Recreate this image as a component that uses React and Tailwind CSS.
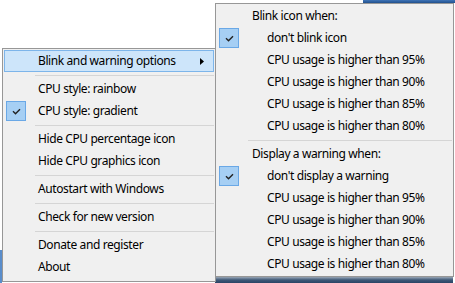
import React from "react";

function Check() {
  return (
    <span className="w-[20px] h-[20px] bg-[#A6CFF4] border border-[#6AA8E6] flex items-center justify-center">
      <svg width="9" height="7" viewBox="0 0 9 7">
        <path d="M1 3.3 L3.5 5.8 L8 1.2" stroke="#222" strokeWidth="1.4" fill="none" />
      </svg>
    </span>
  );
}

function Item({ label, checked, gutter, indent = 0, highlight, arrow }) {
  return (
    <div
      className={
        "h-[22px] flex items-center border " +
        (highlight ? "bg-[#CDE5FA] border-[#7DB5EA]" : "border-transparent")
      }
    >
      <div className={"h-full flex items-center shrink-0 " + gutter}>
        {checked ? <Check /> : null}
      </div>
      <span className="whitespace-nowrap tracking-[-0.4px]" style={{ paddingLeft: indent }}>
        {label}
      </span>
      {arrow ? (
        <span className="ml-auto mr-[9px]">
          <svg width="4" height="7" viewBox="0 0 4 7">
            <path d="M0 0 L4 3.5 L0 7 Z" fill="#000" />
          </svg>
        </span>
      ) : null}
    </div>
  );
}

function Sep() {
  return (
    <div className="h-[6px] flex items-center pl-[31px]">
      <div className="h-px flex-1 bg-[#D5D5D5]" />
    </div>
  );
}

export default function App() {
  const L = "w-[33px] pl-[1px]";
  const R = "w-[34px] pl-[1px]";
  return (
    <div className="relative w-[455px] h-[283px] bg-white overflow-hidden font-['Noto_Sans',sans-serif] text-[12px] text-black">
      {/* desktop bits behind the menus */}
      <div className="absolute left-[363px] top-0 w-[92px] h-[3px] bg-gradient-to-b from-[#3F75B8] to-[#22508C]" />
      <div className="absolute left-0 top-[250px] w-[2px] h-[33px] bg-[#5A8DCB]" />
      <div className="absolute left-[215px] top-[277px] w-[238px] h-[6px] bg-gradient-to-b from-[#9AA7B6] via-[#3E5877] to-[#2A4466]" />

      {/* main menu */}
      <div className="absolute left-[2px] top-[48px] w-[214px] bg-[#F0F0F0] border border-[#979797] pt-[1px] pb-[3px] px-[1px]">
        <Item label="Blink and warning options" gutter={L} highlight arrow />
        <Sep />
        <Item label="CPU style: rainbow" gutter={L} />
        <Item label="CPU style: gradient" gutter={L} checked />
        <Sep />
        <Item label="Hide CPU percentage icon" gutter={L} />
        <Item label="Hide CPU graphics icon" gutter={L} />
        <Sep />
        <Item label="Autostart with Windows" gutter={L} />
        <Sep />
        <Item label="Check for new version" gutter={L} />
        <Sep />
        <Item label="Donate and register" gutter={L} />
        <Item label="About" gutter={L} />
      </div>

      {/* submenu */}
      <div className="absolute left-[215px] top-[3px] w-[239px] bg-[#F0F0F0] border border-[#979797] py-[1px] px-[1px]">
        <Item label="Blink icon when:" gutter={R} />
        <Item label="don't blink icon" gutter={R} indent={15} checked />
        <Item label="CPU usage is higher than 95%" gutter={R} indent={15} />
        <Item label="CPU usage is higher than 90%" gutter={R} indent={15} />
        <Item label="CPU usage is higher than 85%" gutter={R} indent={15} />
        <Item label="CPU usage is higher than 80%" gutter={R} indent={15} />
        <Sep />
        <Item label="Display a warning when:" gutter={R} />
        <Item label="don't display a warning" gutter={R} indent={15} checked />
        <Item label="CPU usage is higher than 95%" gutter={R} indent={15} />
        <Item label="CPU usage is higher than 90%" gutter={R} indent={15} />
        <Item label="CPU usage is higher than 85%" gutter={R} indent={15} />
        <Item label="CPU usage is higher than 80%" gutter={R} indent={15} />
      </div>
    </div>
  );
}
